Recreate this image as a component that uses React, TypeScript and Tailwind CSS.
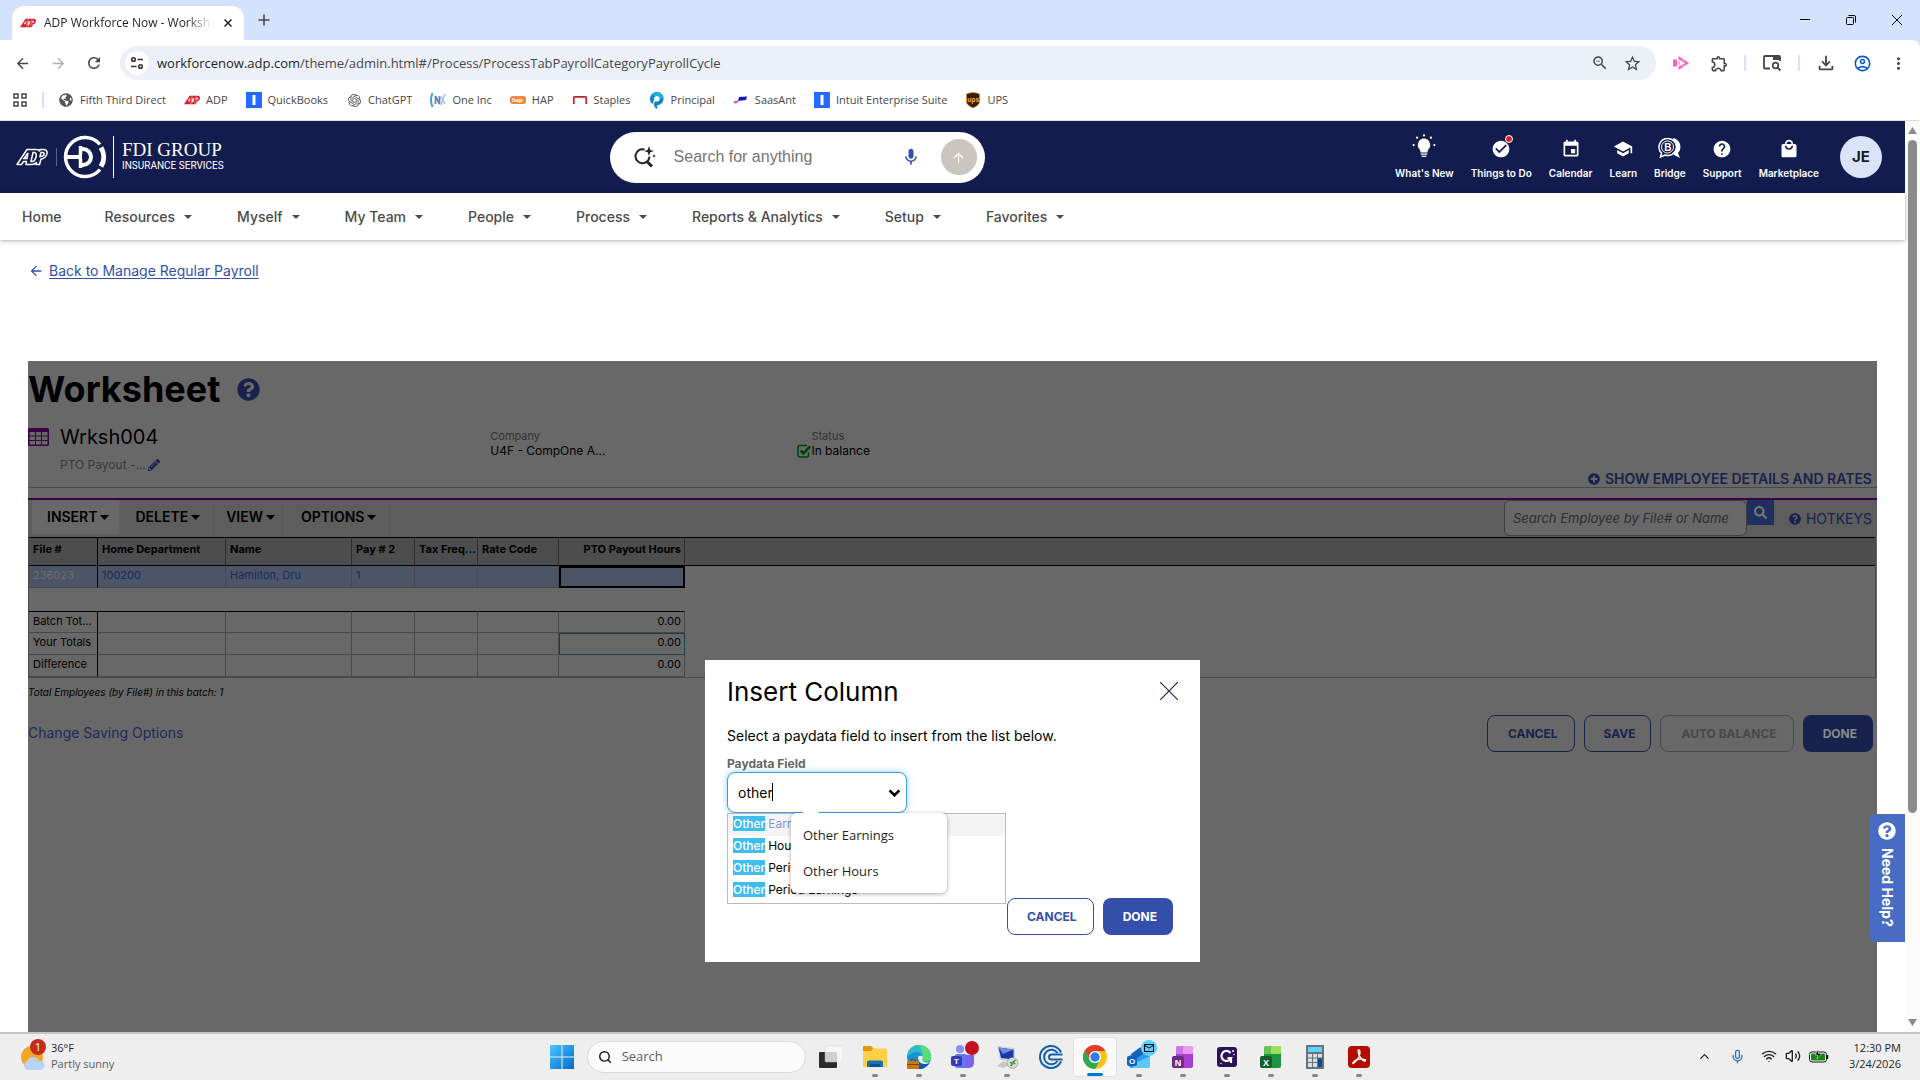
import React from "react";
import {
  MdArrowBack,
  MdArrowForward,
  MdRefresh,
  MdStarBorder,
  MdOutlineExtension,
  MdOutlineFileDownload,
  MdOutlineAccountCircle,
  MdMoreVert,
  MdCheckCircle,
  MdEvent,
  MdSchool,
  MdHelp,
  MdLocalMall,
  MdMic,
  MdArrowUpward,
  MdOutlineZoomOut,
  MdOutlineMailOutline,
} from "react-icons/md";
import {
  FaQuestionCircle,
  FaPlusCircle,
  FaPencilAlt,
  FaSearch,
  FaGlobeAmericas,
} from "react-icons/fa";
import { SiOpenai } from "react-icons/si";
import { Mic, ChevronUp, Wifi, Volume2, Search } from "lucide-react";

const UI = "font-['Open_Sans','Noto_Sans',sans-serif]";

/* ---------- small drawings ---------- */

function AdpMark({ className }: { className: string }) {
  return (
    <svg viewBox="0 0 32 18" className={className} aria-hidden="true">
      <path
        d="M0 17.500 L11 0.500 H28 Q33.500 1.500 31.500 7 Q30 11.500 25.500 12 L24 17.500 Z"
        fill="#d4222a"
      />
      <path
        d="M8 11 L12 5 L11 11 Z M15.500 13.500 L17.500 5 H18.500 Q20.500 5.500 19.500 9 Q18.500 13 16.500 13.500 Z M24.500 8.500 L25.500 4.500 H27 Q28.500 5 27.500 7 Q26.500 8.500 24.500 8.500 Z M13.500 17 L16 1.500 M21.500 17 L23.500 1.500"
        fill="#fff"
        stroke="#fff"
        strokeWidth="0.800"
      />
    </svg>
  );
}

function AdpHeaderLogo() {
  return (
    <svg viewBox="0 0 32 18" className="h-[18px] w-8" role="img" aria-label="ADP">
      <path
        d="M1 16.5 L11 1.5 H20 Q23 1.5 23.5 3 L24 1.5 H28 Q32.5 2.5 30.5 7 Q29 10.5 25 11 L23.5 16.5 H20 L20.5 14.5 Q18.500 16.500 16 16.500 H10 L10.500 13.500 H7.500 L5.500 16.500 Z"
        fill="none"
        stroke="#fff"
        strokeWidth="1.500"
        strokeLinejoin="round"
      />
      <path d="M8 10.500 L12 5 L11 10.500 Z M15 13.500 L17 4.500 H18.500 Q21 5 20 9 Q19 13 16.500 13.500 Z M24 8.500 L25 4.500 H27 Q29 5 27.500 7.500 Q26.500 8.500 24 8.500 Z" fill="none" stroke="#fff" strokeWidth="1.500" />
    </svg>
  );
}

function FdiEmblem() {
  return (
    <svg viewBox="0 0 44 44" className="h-11 w-11" aria-hidden="true">
      <g fill="none" stroke="#fff">
        <path d="M37 9.500 A19.500 19.500 0 1 0 37 34.500" strokeWidth="3.500" />
        <path d="M38 12.500 A18 18 0 0 1 38 31.500" strokeWidth="5" />
        <path d="M3 22 H19" strokeWidth="4" />
        <path d="M18.500 14 H20 A8 8 0 0 1 20 30 H18.500" strokeWidth="4" />
        <path d="M17.500 11 V20 M17.500 24 V33" strokeWidth="3.500" />
      </g>
    </svg>
  );
}

function PrincipalMark() {
  return (
    <svg viewBox="0 0 16 18" className="h-[17px] w-4">
      <path d="M8 0 A7 7 0 0 1 8 14 Q8 17 9 18 Q4 17 5 11 Q5.500 9.500 8 10 A3 3 0 1 0 5 7 Q5 10 3 13 A7.500 7.500 0 0 1 8 0Z" fill="#0d86c9" />
      <path d="M8 0 A7 7 0 0 1 15 7 H11 A3 3 0 0 0 6 5 L3 2 Q5 0 8 0Z" fill="#17b3dc" />
    </svg>
  );
}

function IntuitMark() {
  return (
    <svg viewBox="0 0 16 16" className="h-4 w-4">
      <rect width="16" height="16" fill="#236cff" />
      <rect x="6.500" y="3" width="3" height="10" fill="#fff" />
    </svg>
  );
}

function Caret({ className = "h-1 w-2" }: { className?: string }) {
  return (
    <svg viewBox="0 0 8 4" preserveAspectRatio="none" className={className} aria-hidden="true">
      <path d="M0 0 H8 L4 4 Z" fill="currentColor" />
    </svg>
  );
}

function GridMark() {
  return (
    <svg viewBox="0 0 21 18" className="h-[18px] w-[21px] shrink-0" aria-hidden="true">
      <rect width="21" height="18" rx="1.500" fill="#3a0046" />
      <path
        d="M1.500 4 H7 V7.500 H1.500Z M8 4 H13 V7.500 H8Z M14 4 H19.500 V7.500 H14Z M1.500 8.500 H7 V12 H1.500Z M8 8.500 H13 V12 H8Z M14 8.500 H19.500 V12 H14Z M1.500 13 H7 V16.500 H1.500Z M8 13 H13 V16.500 H8Z M14 13 H19.500 V16.500 H14Z"
        fill="#686868"
      />
    </svg>
  );
}

function BalancedMark() {
  return (
    <svg viewBox="0 0 14 14" className="-ml-px h-3.5 w-3.5" fill="none" stroke="#00400a" aria-hidden="true">
      <path d="M10 1.500 H3 Q1 1.500 1 3.500 V11 Q1 13 3 13 H9.500 Q11.500 13 11.500 11 V8" strokeWidth="1.500" />
      <path d="M3.500 6.500 L6.500 9.500 L13 2.500" strokeWidth="2.600" />
    </svg>
  );
}

function Bulb() {
  return (
    <svg viewBox="0 0 26 26" className="h-7 w-6" fill="#fff" aria-hidden="true">
      <path d="M13 5 A7 7 0 0 1 17 17.500 V20 H9 V17.500 A7 7 0 0 1 13 5Z" />
      <path d="M9.500 21 H16.500 V22.500 H9.500Z M10.500 23.500 H15.500 V25 H10.500Z" />
      <circle cx="13" cy="1.500" r="1.200" />
      <circle cx="5.500" cy="4" r="1.200" />
      <circle cx="20.500" cy="4" r="1.200" />
      <circle cx="1.800" cy="12" r="1.200" />
      <circle cx="24.200" cy="12" r="1.200" />
    </svg>
  );
}

function BridgeMark() {
  return (
    <svg viewBox="0 0 24 22" className="h-[22px] w-6" aria-hidden="true">
      <path d="M15 1 A9 9 0 0 1 20 16 L22 21 L16 18 Z" fill="#fff" />
      <path d="M9.500 1.500 A8.500 8.500 0 1 1 7 18 L2.500 20 L3.500 16 A8.500 8.500 0 0 1 9.500 1.500Z" fill="#121c4e" stroke="#fff" strokeWidth="1.500" />
      <circle cx="9.500" cy="10" r="6" fill="none" stroke="#fff" />
      <text x="6.300" y="13.600" fontSize="10" fontWeight="700" fontFamily="Liberation Sans" fill="#fff">B</text>
    </svg>
  );
}

/* ---------- browser chrome ---------- */

function TabStrip() {
  return (
    <div className="flex h-10 items-end bg-[#d3e2fd]">
      <div className="ml-3 flex h-[34px] w-[232px] items-center rounded-t-xl bg-white px-2">
        <AdpMark className="h-2.5 w-4 shrink-0" />
        <span className="ml-2 w-[168px] overflow-hidden whitespace-nowrap bg-gradient-to-r from-[#1f1f1f] from-85% to-transparent bg-clip-text text-xs text-transparent">
          ADP Workforce Now - Worksheet
        </span>
        <button aria-label="Close tab" className="ml-3 text-[#1f1f1f]">
          <svg viewBox="0 0 8 8" className="h-2 w-2">
            <path d="M0.500 0.500 L7.500 7.500 M7.500 0.500 L0.500 7.500" stroke="currentColor" strokeWidth="1.500" />
          </svg>
        </button>
      </div>
      <button aria-label="New tab" className="ml-[14px] flex h-10 items-center text-[#474747]">
        <svg viewBox="0 0 12 12" className="h-3 w-3">
          <path d="M6 0.500 V11.500 M0.500 6 H11.500" stroke="currentColor" strokeWidth="1.600" />
        </svg>
      </button>
      <div className="ml-auto flex h-10 items-center gap-9 pr-[18px]">
        <button aria-label="Minimize">
          <svg viewBox="0 0 10 10" className="h-2.5 w-2.5"><path d="M0 4.500 H10" stroke="#000" /></svg>
        </button>
        <button aria-label="Restore">
          <svg viewBox="0 0 10 10" className="h-2.5 w-2.5" fill="none" stroke="#000">
            <rect x="0.500" y="2.500" width="7" height="7" rx="1" />
            <path d="M2.500 0.500 H8 Q9.500 0.500 9.500 2 V7.500" />
          </svg>
        </button>
        <button aria-label="Close window">
          <svg viewBox="0 0 10 10" className="h-2.5 w-2.5"><path d="M0 0 L10 10 M10 0 L0 10" stroke="#000" /></svg>
        </button>
      </div>
    </div>
  );
}

function Toolbar() {
  return (
    <div className="bg-[#d3e2fd]">
      <div className="flex h-[43px] items-start rounded-tr-lg bg-white pl-2.5 pr-2.5 pt-1.5">
        <div className="flex h-[34px] flex-1 items-center text-[#474747]">
          <button aria-label="Back" className="flex w-6 justify-center"><MdArrowBack size={17} /></button>
          <button aria-label="Forward" className="ml-3 flex w-6 justify-center text-[#b0b0b0]"><MdArrowForward size={17} /></button>
          <button aria-label="Reload" className="ml-3 flex w-6 justify-center"><MdRefresh size={18} /></button>
          <div className="ml-3.5 flex h-[34px] flex-1 items-center rounded-full bg-[#ecf0f9] pl-[5px] pr-3.5">
            <span className="flex h-6 w-6 items-center justify-center rounded-full bg-white">
              <svg viewBox="0 0 14 14" className="h-3.5 w-3.5" fill="none" stroke="#333" strokeWidth="1.600">
                <circle cx="3.500" cy="3.500" r="1.800" />
                <path d="M7.500 3.500 H13 M1 10.500 H6.500" />
                <circle cx="10.500" cy="10.500" r="1.800" />
              </svg>
            </span>
            <div className="ml-2 flex-1 whitespace-nowrap pt-px text-[13px] text-[#474747]">
              <span className="text-[#1f1f1f]">workforcenow.adp.com</span>/theme/admin.html#/Process/ProcessTabPayrollCategoryPayrollCycle
            </div>
            <button aria-label="Zoom"><MdOutlineZoomOut size={18} /></button>
            <button aria-label="Bookmark this tab" className="ml-3.5"><MdStarBorder size={19} /></button>
          </div>
          <button aria-label="Recorder" className="ml-[13px] flex w-6 justify-center">
            <svg viewBox="0 0 16 14" className="h-3.5 w-4">
              <rect x="0" y="3.500" width="4" height="7" fill="#ff5fc0" />
              <path d="M5.500 0 L16 7 L5.500 14 V10.500 L8 9.500 L12 7 L8 4.500 L5.500 3.500Z" fill="#ff5fc0" />
              <path d="M6 5 V9" stroke="#ff5fc0" />
              <path d="M11 2.500 V5 M11 9 V11.500" stroke="#fff" strokeWidth="0.800" />
            </svg>
          </button>
          <button aria-label="Extensions" className="ml-3.5 flex w-6 justify-center"><MdOutlineExtension size={19} /></button>
          <span className="ml-[13px] h-4 w-0.5 bg-[#d3e2fd]" />
          <button aria-label="Search this page" className="ml-3.5 flex w-6 justify-center">
            <svg viewBox="0 0 18 18" className="h-[18px] w-[18px]" fill="none" stroke="#474747" strokeWidth="1.800">
              <path d="M7 14.500 H2 Q1 14.500 1 13.500 V3 Q1 2 2 2 H16 Q17 2 17 3 V7" />
              <path d="M10 1.500 H17 V6 H10Z" fill="#474747" stroke="none" />
              <circle cx="12.500" cy="11.500" r="2.800" />
              <path d="M14.500 13.500 L17.500 16.500" />
            </svg>
          </button>
          <span className="ml-3.5 h-4 w-0.5 bg-[#d3e2fd]" />
          <button aria-label="Downloads" className="ml-3.5 flex w-6 justify-center"><MdOutlineFileDownload size={22} /></button>
          <button aria-label="Profile" className="ml-3 flex w-6 justify-center text-[#0b57d0]"><MdOutlineAccountCircle size={19} /></button>
          <button aria-label="Menu" className="ml-3 flex w-6 justify-center"><MdMoreVert size={19} /></button>
        </div>
      </div>
    </div>
  );
}

const bookmarks: { name: string; icon: React.ReactNode }[] = [
  { name: "Fifth Third Direct", icon: <FaGlobeAmericas size={14} color="#555" /> },
  { name: "ADP", icon: <AdpMark className="h-2.5 w-4" /> },
  { name: "QuickBooks", icon: <IntuitMark /> },
  { name: "ChatGPT", icon: <SiOpenai size={13} color="#555" /> },
  {
    name: "One Inc",
    icon: (
      <svg viewBox="0 0 16 14" className="h-3.5 w-4" fill="none">
        <path d="M2.500 0 Q-0.500 7 2.500 14" stroke="#3f9fd8" strokeWidth="2" />
        <path d="M5.500 3 V11 M5.500 3 L9.500 11 V3" stroke="#6a86b0" strokeWidth="1.800" />
        <path d="M10.500 3 L15 11 M15 1 L11 12" stroke="#9fc3df" strokeWidth="1.500" />
      </svg>
    ),
  },
  {
    name: "HAP",
    icon: (
      <svg viewBox="0 0 16 8" className="h-2 w-4">
        <rect width="16" height="8" rx="3" fill="#f0873a" />
        <text x="2" y="6" fontSize="6" fontWeight="700" fontFamily="Liberation Sans" fill="#fff">hap</text>
      </svg>
    ),
  },
  {
    name: "Staples",
    icon: (
      <svg viewBox="0 0 16 9" className="h-2 w-4"><path d="M1 9 V2 Q1 1 2 1 H14 Q15 1 15 2 V9" fill="none" stroke="#cc1f2b" strokeWidth="2" /></svg>
    ),
  },
  { name: "Principal", icon: <PrincipalMark /> },
  {
    name: "SaasAnt",
    icon: (
      <svg viewBox="0 0 16 8" className="h-2 w-4">
        <path d="M6 1 L14 0.500 L13 4 L5 5Z" fill="#1a12c9" />
        <path d="M1 5 L5.500 4.500 L4.500 7 L1 7.500Z" fill="#e55bb8" />
      </svg>
    ),
  },
  { name: "Intuit Enterprise Suite", icon: <IntuitMark /> },
  {
    name: "UPS",
    icon: (
      <svg viewBox="0 0 16 17" className="h-4 w-4">
        <path d="M1 2 Q8 -1 15 2 V10 Q15 14 8 17 Q1 14 1 10Z" fill="#3a1c10" stroke="#e0a02a" strokeWidth="0.600" />
        <text x="2" y="11" fontSize="7" fontWeight="700" fontFamily="Liberation Sans" fill="#f4b32c">ups</text>
      </svg>
    ),
  },
];

function BookmarksBar() {
  return (
    <div className="flex h-[38px] items-center border-b border-[#dadce0] bg-white pb-[3px] pl-[13px]">
      <button aria-label="Apps">
        <svg viewBox="0 0 14 14" className="h-3.5 w-3.5" fill="none" stroke="#474747" strokeWidth="1.500">
          <path d="M1 1 H5 V5 H1Z M9 1 H13 V5 H9Z M1 9 H5 V13 H1Z M9 9 H13 V13 H9Z" />
        </svg>
      </button>
      <span className="ml-[15px] mr-3.5 h-4 w-0.5 bg-[#d3e2fd]" />
      <nav aria-label="Bookmarks" className="flex items-center gap-[18px]">
        {bookmarks.map((b) => (
          <a key={b.name} href="#bookmark" className="flex items-center gap-1.5 whitespace-nowrap text-[11px] text-[#474747]">
            <span className="flex w-4 justify-center">{b.icon}</span>
            {b.name}
          </a>
        ))}
      </nav>
    </div>
  );
}

/* ---------- site header ---------- */

const headerLinks: { label: string; icon: React.ReactNode }[] = [
  { label: "What's New", icon: <Bulb /> },
  {
    label: "Things to Do",
    icon: (
      <span className="relative">
        <MdCheckCircle size={20} />
        <span className="absolute -top-1 left-3.5 h-2 w-2 rounded-full border border-white bg-[#d0271d]" />
      </span>
    ),
  },
  { label: "Calendar", icon: <MdEvent size={20} /> },
  { label: "Learn", icon: <MdSchool size={20} /> },
  { label: "Bridge", icon: <BridgeMark /> },
  { label: "Support", icon: <MdHelp size={20} /> },
  { label: "Marketplace", icon: <MdLocalMall size={20} /> },
];

function HeaderBar() {
  return (
    <header className="flex h-[72px] items-center bg-[#121c4e] text-white">
      <div className="flex w-[32%] items-center pl-4">
        <AdpHeaderLogo />
        <span className="ml-2 mr-1.5 h-[18px] w-px bg-[#5a6390]" />
        <FdiEmblem />
        <div className="ml-1.5 flex h-[42px] flex-col justify-center border-l border-white pl-2">
          <span className="font-['Liberation_Serif',serif] text-[19px] leading-[18px]">FDI GROUP</span>
          <span className="font-['Roboto',sans-serif] text-[10px] leading-[14px]">INSURANCE SERVICES</span>
        </div>
      </div>
      <form className="flex h-[51px] w-[375px] items-center rounded-full bg-white pl-6 pr-2" onSubmit={(e) => e.preventDefault()}>
        <svg viewBox="0 0 22 22" className="h-[22px] w-[22px] shrink-0" fill="none" stroke="#222" strokeWidth="2">
          <path d="M10.500 3.500 A7 7 0 1 0 15.500 10.500" />
          <path d="M13 15.500 L18 20.500" strokeWidth="3" />
          <path d="M15 0 L16.300 4 L20 5 L16.300 6.300 L15 10 L13.700 6.300 L10 5 L13.700 4Z M20 8 L20.600 9.600 L22 10 L20.600 10.600 L20 12 L19.400 10.600 L18 10 L19.400 9.600Z" fill="#222" stroke="none" />
        </svg>
        <input
          aria-label="Search for anything"
          placeholder="Search for anything"
          className="ml-[18px] min-w-0 flex-1 font-['Liberation_Sans',sans-serif] text-base text-black outline-none placeholder:text-[#757575]"
        />
        <button type="button" aria-label="Voice search" className="text-[#334faa]"><MdMic size={20} /></button>
        <button aria-label="Submit search" className="ml-5 flex h-9 w-9 items-center justify-center rounded-full bg-[#cbc5bf]"><MdArrowUpward size={15} /></button>
      </form>
      <nav aria-label="Shortcuts" className="flex flex-1 items-center justify-end gap-[17px] pr-[23px]">
        {headerLinks.map((l) => (
          <a key={l.label} href="#shortcut" className="flex h-12 flex-col items-center justify-end whitespace-nowrap text-[10px] font-semibold">
            {l.icon}
            <span className="mt-1.5 leading-4">{l.label}</span>
          </a>
        ))}
        <button className="ml-1 h-[42px] w-[42px] rounded-full bg-[#d9e4f8] text-[15px] font-bold text-[#1c1c1c]">JE</button>
      </nav>
    </header>
  );
}

const menus = ["Resources", "Myself", "My Team", "People", "Process", "Reports & Analytics", "Setup", "Favorites"];

function MainNav() {
  return (
    <nav aria-label="Main" className="flex h-[47px] items-center bg-white pl-[22px] text-sm font-medium text-[#4b4b4b] shadow-[0_1px_4px_rgba(0,0,0,0.3)]">
      <a href="#home" className="mr-[43px]">Home</a>
      <div className="flex gap-[45px]">
        {menus.map((m) => (
          <button key={m} className="flex items-center gap-[9px] whitespace-nowrap">
            {m}
            <Caret />
          </button>
        ))}
      </div>
    </nav>
  );
}

/* ---------- worksheet ---------- */

const toolMenus = ["INSERT", "DELETE", "VIEW", "OPTIONS"];
const headings = ["File #", "Home Department", "Name", "Pay # 2", "Tax Freq...", "Rate Code", "PTO Payout Hours"];
const employee = ["236023", "100200", "Hamilton, Dru", "1", "", "", ""];
const totals = [
  { label: "Batch Tot...", value: "0.00" },
  { label: "Your Totals", value: "0.00" },
  { label: "Difference", value: "0.00" },
];

function WorksheetGrid() {
  return (
    <div className="mr-px border-x border-b border-[#494949]">
      <table className="w-full table-fixed border-separate border-spacing-0 text-left text-[11px] leading-[18px] text-black">
        <colgroup>
          <col className="w-[69px]" />
          <col className="w-[128px]" />
          <col className="w-[126px]" />
          <col className="w-[63px]" />
          <col className="w-[63px]" />
          <col className="w-[81px]" />
          <col className="w-[126px]" />
          <col />
        </colgroup>
        <thead>
          <tr className="h-[29px] bg-[#4d4d4d] align-top">
            {headings.map((h, i) => (
              <th
                key={h}
                className={
                  "whitespace-nowrap border-y border-r border-y-black pt-0.5 font-bold " +
                  (i === 0 ? "border-r-black pl-1" : i === 6 ? "border-r-[#2e2e2e] pr-[3px] text-right" : "border-r-[#2e2e2e] pl-1")
                }
              >
                {h}
              </th>
            ))}
            <td className="border-y border-black" />
          </tr>
        </thead>
        <tbody>
          <tr className="h-[22px] align-top text-[#1b2b5c]">
            {employee.map((v, i) => (
              <td
                key={i}
                className={
                  "whitespace-nowrap bg-[#4b5567] " +
                  (i === 0
                    ? "border-b border-r border-b-[#494949] border-r-black pl-1 text-[#6c6c6c]"
                    : i === 6
                      ? "border-2 border-black"
                      : "border-b border-r border-[#494949] pl-1")
                }
              >
                {v}
              </td>
            ))}
            <td />
          </tr>
          <tr className="h-[23px]">
            <td colSpan={8} />
          </tr>
          {totals.map((t, r) => (
            <tr key={t.label} className="h-[22px] align-top">
              {headings.map((h, i) => (
                <td
                  key={h}
                  className={
                    "whitespace-nowrap border-b border-r border-b-[#494949] " +
                    (r === 0 ? "border-t border-t-black " : "") +
                    (i === 0 ? "border-r-black pl-1" : i === 6 ? "border-r-[#494949] pr-[3px] text-right" : "border-r-[#494949]") +
                    (i === 6 && r === 1 ? " outline outline-1 -outline-offset-1 outline-[#1d3f49]" : "")
                  }
                >
                  {i === 0 ? t.label : i === 6 ? t.value : ""}
                </td>
              ))}
              <td />
            </tr>
          ))}
        </tbody>
      </table>
    </div>
  );
}

function InsertColumnDialog() {
  const options = ["Earnings", "Hours", "Period Hours", "Period Earnings"];
  return (
    <div role="dialog" aria-labelledby="dlg-title" className="w-[495px] bg-white px-[22px] pb-[27px] pt-[11px] text-black">
      <div className="flex h-10 items-center justify-between">
        <h2 id="dlg-title" className="text-[26px]">Insert Column</h2>
        <button aria-label="Close">
          <svg viewBox="0 0 18 18" className="h-[18px] w-[18px]"><path d="M0 0 L18 18 M18 0 L0 18" stroke="#1d2b4a" strokeWidth="1.200" /></svg>
        </button>
      </div>
      <p className="mt-[15px] text-sm">Select a paydata field to insert from the list below.</p>
      <label htmlFor="paydata" className="mt-[9px] block text-xs leading-[17px] font-bold text-[#666]">Paydata Field</label>
      <div className="relative w-[180px]">
        <div className="flex h-[41px] items-center rounded-lg border border-[#3f9be6] bg-white pl-2.5 pr-[5px] shadow-[0_0_6px_rgba(80,170,240,0.6)]">
          <input id="paydata" defaultValue="other" className="min-w-0 flex-1 bg-transparent text-sm outline-none" />
          <button aria-label="Open list">
            <svg viewBox="0 0 14 9" className="h-2 w-[13px]"><path d="M1.500 1.500 L7 7 L12.500 1.500" fill="none" stroke="#000" strokeWidth="3" /></svg>
          </button>
        </div>
        <span className="absolute left-[45px] top-[11px] h-[18px] w-px bg-black" />
        <ul className="absolute left-0 top-[41px] w-[279px] border border-[#bbb] bg-white pb-px text-xs">
          {options.map((o, i) => (
            <li key={o} className={"flex h-[22px] gap-[3px] pl-[5px] pt-0.5 leading-[15px] " + (i === 0 ? "bg-[#f4f4f4] text-[#8295e0]" : "")}>
              <span className="h-[15px] bg-[#3fbdee] font-medium text-white">Other</span>
              {o}
            </li>
          ))}
        </ul>
        <div className="absolute left-[64px] top-[41px] w-[156px] rounded-md bg-white shadow-[0_1px_4px_rgba(0,0,0,0.35)]">
          <span className="absolute -top-[6px] left-[14px] h-3 w-3 rotate-45 bg-white" />
          <ul className={"relative flex flex-col pb-[3px] pl-3 pt-[5px] text-[13px] text-[#1f1f1f] " + UI}>
            <li className="flex h-9 items-center">Other Earnings</li>
            <li className="flex h-9 items-center">Other Hours</li>
          </ul>
        </div>
      </div>
      <div className="mr-[5px] mt-[85px] flex justify-end gap-[9px]">
        <button className="h-[37px] rounded-lg border border-[#334faa] pl-[19px] pr-4 text-xs font-bold text-[#334faa]">CANCEL</button>
        <button className="h-[37px] rounded-lg bg-[#334faa] pl-5 pr-4 text-xs font-bold text-white">DONE</button>
      </div>
    </div>
  );
}

function Worksheet() {
  return (
    <section className="relative mx-7 flex-1 bg-[#686868] text-black">
      <div className="flex h-14 items-center">
        <h1 className="text-[36px] font-bold">Worksheet</h1>
        <button aria-label="Worksheet help" className="ml-[17px] text-[#17234c]"><FaQuestionCircle size={23} /></button>
      </div>
      <div className="grid h-[71px] grid-cols-12 border-b border-[#494949]">
        <div className="col-span-3 flex pt-[11px]">
          <GridMark />
          <div className="ml-[11px]">
            <p className="-mt-px text-xl leading-5">Wrksh004</p>
            <p className="mt-2 flex items-center text-xs leading-5 text-[#3a3a3a]">
              PTO Payout -...
              <button aria-label="Edit description" className="ml-0.5 text-[#17234c]"><FaPencilAlt size={12} /></button>
            </p>
          </div>
        </div>
        <div className="col-span-2 pt-3">
          <p className="text-[11px] leading-[14px] text-[#333]">Company</p>
          <p className="text-xs leading-4">U4F - CompOne A...</p>
        </div>
        <div className="col-span-2 pt-3">
          <p className="pl-[13px] text-[11px] leading-[14px] text-[#333]">Status</p>
          <p className="flex items-center text-xs leading-4">
            <BalancedMark />
            In balance
          </p>
        </div>
        <div className="col-span-5 flex items-end justify-end pr-[5px]">
          <button className="flex items-center gap-[5px] text-sm leading-4 font-semibold text-[#17234c]">
            <FaPlusCircle size={12} />
            SHOW EMPLOYEE DETAILS AND RATES
          </button>
        </div>
      </div>
      <div className="mt-2.5 flex h-[39px] items-stretch border-t-2 border-[#3a0046] bg-[#5d5d5d] pl-1">
        {toolMenus.map((m, i) => (
          <button
            key={m}
            className={
              "mb-[3px] flex items-center gap-[3px] border-r border-[#636363] pr-2.5 text-sm font-semibold " +
              (i === 0 ? "bg-[#686868] pl-[15px]" : "pl-[15px]")
            }
          >
            {m}
            <Caret className="h-[5px] w-[9px]" />
          </button>
        ))}
        <div className="ml-auto flex items-start">
          <input
            aria-label="Search employee"
            placeholder="Search Employee by File# or Name"
            className="h-9 w-[243px] rounded-md border border-[#3f3f3f] bg-[#686868] px-2 text-[13px] italic outline-none placeholder:text-[#2e2e2e]"
          />
          <button aria-label="Search" className="flex h-[25px] w-[27px] items-center justify-center bg-[#1f2f60] text-[#777]"><FaSearch size={13} /></button>
        </div>
        <button className="ml-[15px] mr-[5px] flex items-center gap-[5px] text-sm text-[#17234c]"><FaQuestionCircle size={12} />HOTKEYS</button>
      </div>
      <WorksheetGrid />
      <p className="h-[37px] pt-1.5 text-[10px] leading-4 italic">Total Employees (by File#) in this batch: 1</p>
      <div className="flex h-[37px] items-center justify-between pr-1">
        <a href="#saving" className="pb-0.5 text-sm text-[#1b2b5c]">Change Saving Options</a>
        <div className="flex gap-[9px]">
          <button className="h-[37px] rounded-lg border border-[#17234c] pl-5 pr-4 text-xs font-bold text-[#17234c]">CANCEL</button>
          <button className="h-[37px] rounded-lg border border-[#17234c] pl-[19px] pr-[15px] text-xs font-bold text-[#17234c]">SAVE</button>
          <button className="h-[37px] rounded-lg border border-[#4a4a4a] pl-5 pr-4 text-xs font-bold text-[#494949]">AUTO BALANCE</button>
          <button className="h-[37px] rounded-lg bg-[#17234c] pl-5 pr-4 text-xs font-bold text-[#8a8a8a]">DONE</button>
        </div>
      </div>
      <div className="absolute inset-x-0 top-[299px] flex justify-center">
        <InsertColumnDialog />
      </div>
    </section>
  );
}

/* ---------- taskbar ---------- */

function AppTile({ letter, from, body }: { letter: string; from: string; body: string }) {
  return (
    <svg viewBox="0 0 24 24" className="h-6 w-6">
      <rect x="5" y="1" width="17" height="22" rx="2" fill={body} />
      <rect x="12" y="1" width="10" height="8" rx="1" fill={from} />
      <rect x="5" y="1" width="8" height="8" rx="1" fill={from} opacity="0.600" />
      <rect x="1" y="11" width="12" height="12" rx="2" fill={body} />
      <rect x="1" y="11" width="12" height="12" rx="2" fill="#000" opacity="0.350" />
      <text x="7" y="20.500" textAnchor="middle" fontSize="9" fontWeight="700" fontFamily="Liberation Sans" fill="#fff">{letter}</text>
    </svg>
  );
}

const apps: { name: string; running: boolean; active?: boolean; icon: React.ReactNode }[] = [
  {
    name: "Task view",
    running: false,
    icon: (
      <svg viewBox="0 0 24 24" className="h-6 w-6">
        <rect x="0" y="7" width="18" height="16" rx="1" fill="#2b2b2b" />
        <rect x="6" y="1" width="18" height="16" rx="1" fill="#f8f8f8" opacity="0.800" stroke="#ccc" strokeWidth="0.500" />
      </svg>
    ),
  },
  {
    name: "File Explorer",
    running: true,
    icon: (
      <svg viewBox="0 0 24 24" className="h-6 w-6">
        <path d="M0 2 Q0 1 1 1 H8 L10 3 V8 H0Z" fill="#dc9a06" />
        <path d="M0 6 H8 L10 3.500 H23 Q24 3.500 24 5 V22 H0Z" fill="#ffcf48" />
        <path d="M4 22 V17 Q4 15.500 6 15.500 H18 Q20 15.500 20 17 V22Z" fill="#1273b8" />
        <path d="M7 19 H17 V22 H7Z" fill="#0b518c" />
      </svg>
    ),
  },
  {
    name: "Edge",
    running: true,
    icon: (
      <svg viewBox="0 0 24 24" className="h-6 w-6">
        <circle cx="12" cy="12" r="12" fill="#1791d8" />
        <path d="M3 4 A12 12 0 0 1 24 12 Q24 16.500 18 16.500 Q14.500 16 15.500 13 Q15 6.500 8 7.500 Q3 8 0.500 12 Q0.500 7 3 4Z" fill="#2fb9c9" />
        <path d="M12 0 A12 12 0 0 1 24 12 Q24 16.500 18 16.500 Q14.500 16 15.500 13 Q17 6 12 0Z" fill="#5fdc6e" />
        <path d="M10 12 Q10 19 18 19 Q21 19 23 17 A12 12 0 0 1 10 24Z" fill="#0f5ba8" />
        <path d="M11 12 A3 3 0 0 1 16 12 Q14 15 17 17 Q20 18 23 16.500 Q21 19.500 17 19 Q11 18 11 12Z" fill="#eee" />
        <rect x="0" y="16" width="12" height="8" rx="1" fill="#c77710" />
        <rect x="0" y="19" width="12" height="1" fill="#7a430b" />
        <path d="M4 16 V14.500 H8 V16" fill="none" stroke="#7a430b" />
      </svg>
    ),
  },
  {
    name: "Teams",
    running: true,
    icon: (
      <span className="relative">
        <svg viewBox="0 0 24 24" className="h-6 w-6">
          <circle cx="9" cy="4" r="4" fill="#8b8ff5" />
          <circle cx="19" cy="6" r="3" fill="#6a5de0" />
          <rect x="3" y="9" width="14" height="14" rx="4" fill="#5b7bf0" />
          <path d="M15 10 H23 V18 Q23 23 17 23 H14Z" fill="#7d63f0" />
          <rect x="0" y="11" width="11" height="10" rx="2" fill="#3d38b5" />
          <text x="5.500" y="19" textAnchor="middle" fontSize="8" fontWeight="700" fontFamily="Liberation Sans" fill="#fff">T</text>
        </svg>
        <span className="absolute -top-1 left-3.5 h-3.5 w-3.5 rounded-full bg-[#c50f1f]" />
      </span>
    ),
  },
  {
    name: "Remote Desktop",
    running: true,
    icon: (
      <svg viewBox="0 0 24 24" className="h-6 w-6">
        <path d="M2 1 L20 3 V17 L5 15Z" fill="#cfd4da" />
        <path d="M3.500 2.500 L18.500 4.500 V14.500 L6 13Z" fill="#1c39a8" />
        <path d="M3.500 2.500 L18.500 4.500 L8 9Z" fill="#6f8ce0" />
        <path d="M2 21 L9 16 L14 20 L8 23Z" fill="#c5c9ce" />
        <circle cx="17.500" cy="18" r="5.500" fill="#d8dcd8" stroke="#8a8f8a" strokeWidth="0.600" />
        <path d="M15 17 L17.500 19 L15.500 21 M20.500 15 L18 17 L20 19" stroke="#2e9440" strokeWidth="1.500" fill="none" />
      </svg>
    ),
  },
  {
    name: "Client portal",
    running: false,
    icon: (
      <svg viewBox="0 0 24 24" className="h-6 w-6" fill="none" stroke="#1560ad" strokeWidth="2">
        <path d="M22 7.500 A11 11 0 1 0 22 16.500" />
        <path d="M18.500 8 A7.300 7.300 0 1 0 18.500 16" />
        <path d="M23.500 9.500 H12.500 A2.500 2.500 0 0 0 12.500 14.500 H23.500" />
      </svg>
    ),
  },
  {
    name: "Chrome",
    running: true,
    active: true,
    icon: (
      <svg viewBox="0 0 24 24" className="h-6 w-6">
        <circle cx="12" cy="12" r="12" fill="#fbc116" />
        <path d="M1.600 6 A12 12 0 0 1 22.400 6 H12 A6 6 0 0 0 6.800 15Z" fill="#e33b2e" />
        <path d="M1.600 6 A12 12 0 0 0 12 24 L17.200 15 A6 6 0 0 1 6.800 15Z" fill="#2da94f" />
        <circle cx="12" cy="12" r="6" fill="#fff" />
        <circle cx="12" cy="12" r="4.700" fill="#2f7de9" />
      </svg>
    ),
  },
  {
    name: "Outlook",
    running: true,
    icon: (
      <span className="relative">
        <svg viewBox="0 0 24 24" className="h-6 w-6">
          <path d="M2 11 L12 3 L23 11 V20 Q23 23 20 23 H5 Q2 23 2 20Z" fill="#2c9af0" />
          <path d="M4 9 L14 2 L20 6 L9 14Z" fill="#1762b8" />
          <path d="M6 19 L23 11 V20 Q23 23 20 23 H6Z" fill="#5ac8fa" />
          <rect x="0" y="11" width="10" height="10" rx="2" fill="#0f60c0" />
          <text x="5" y="19" textAnchor="middle" fontSize="8" fontWeight="700" fontFamily="Liberation Sans" fill="#fff">O</text>
        </svg>
        <span className="absolute -top-[5px] left-3.5 flex h-4 w-4 items-center justify-center rounded-full bg-[#60cdff] text-black"><MdOutlineMailOutline size={12} /></span>
      </span>
    ),
  },
  { name: "OneNote", running: true, icon: <AppTile letter="N" from="#e79af0" body="#a93fd0" /> },
  {
    name: "G app",
    running: true,
    icon: (
      <svg viewBox="0 0 24 24" className="h-6 w-6">
        <rect x="2" y="2" width="20" height="20" rx="3" fill="#2c1259" />
        <path d="M15.500 8 A5 5 0 1 0 16 13 H12.500 M16 12 V18" fill="none" stroke="#fff" strokeWidth="2.200" />
        <circle cx="18" cy="6" r="1" fill="#fff" />
        <circle cx="19" cy="9.500" r="0.700" fill="#fff" />
        <circle cx="6" cy="18.500" r="0.700" fill="#fff" />
      </svg>
    ),
  },
  { name: "Excel", running: true, icon: <AppTile letter="X" from="#9be05a" body="#1d9346" /> },
  {
    name: "Calculator",
    running: true,
    icon: (
      <svg viewBox="0 0 24 24" className="h-6 w-6">
        <rect x="3" y="0" width="18" height="24" rx="1" fill="#66727d" />
        <rect x="5" y="2" width="14" height="5" fill="#5fd4f7" />
        <path d="M5 9 H9 V12.500 H5Z M10 9 H14 V12.500 H10Z M15 9 H19 V12.500 H15Z M5 13.500 H9 V17 H5Z M10 13.500 H14 V17 H10Z M5 18 H9 V22 H5Z M10 18 H14 V22 H10Z" fill="#d9dde0" />
        <rect x="15" y="13.500" width="4" height="8.500" fill="#0f4c8c" />
      </svg>
    ),
  },
  {
    name: "Acrobat",
    running: true,
    icon: (
      <svg viewBox="0 0 24 24" className="h-6 w-6">
        <rect x="1" y="1" width="22" height="22" rx="4" fill="#b30b00" />
        <path d="M12 5 Q14 6 12 12 Q9 17 6 18.500 Q5 17.500 9 15 Q14 13 18.500 15 Q18 17.500 14.500 14 Q11 10 11 6 Q11 5 12 5Z" fill="none" stroke="#fff" strokeWidth="1.400" />
      </svg>
    ),
  },
];

function Taskbar() {
  return (
    <footer className={"grid h-12 grid-cols-[1fr_auto_1fr] items-center border-t-2 border-[#c4c4c4] bg-[#eee] text-[11px] text-[#1f1f1f] " + UI}>
      <button aria-label="Weather" className="flex items-center gap-[5px] pb-0.5 pl-5 text-left">
        <span className="relative">
          <svg viewBox="0 0 26 30" className="h-[30px] w-[26px]">
            <circle cx="12" cy="16" r="11" fill="#f5a423" />
            <path d="M7 29 A5 5 0 0 1 7 20 A6.500 6.500 0 0 1 19 20 A4.500 4.500 0 0 1 21 29Z" fill="#b9d2f7" />
          </svg>
          <span className="absolute -top-0.5 left-2.5 flex h-4 w-4 items-center justify-center rounded-full bg-[#c42b1c] text-[11px] text-white">1</span>
        </span>
        <span className="leading-4">
          <span className="block">36°F</span>
          <span className="block text-[#5d5d5d]">Partly sunny</span>
        </span>
      </button>
      <div className="flex h-full items-center">
        <button aria-label="Start" className="flex w-11 justify-center">
          <svg viewBox="0 0 24 24" className="h-6 w-6">
            <defs>
              <linearGradient id="win" x1="0" y1="0" x2="1" y2="1">
                <stop offset="0" stopColor="#4cc8ff" />
                <stop offset="1" stopColor="#0069cc" />
              </linearGradient>
            </defs>
            <path d="M0 0 H11.500 V11.500 H0Z M12.500 0 H24 V11.500 H12.500Z M0 12.500 H11.500 V24 H0Z M12.500 12.500 H24 V24 H12.500Z" fill="url(#win)" />
          </svg>
        </button>
        <label className="mx-[3px] flex h-8 w-[219px] items-center rounded-full border border-[#dadada] bg-[#fbfbfb] pl-2.5">
          <Search size={16} strokeWidth={2.5} />
          <input aria-label="Search" placeholder="Search" className="ml-2.5 w-full min-w-0 bg-transparent text-[13px] outline-none placeholder:text-[#5d5d5d]" />
        </label>
        {apps.map((a) => (
          <button
            key={a.name}
            aria-label={a.name}
            className={"relative flex h-10 w-11 items-center justify-center rounded " + (a.active ? "border border-[#e2e2e2] bg-[#f9f9f9]" : "")}
          >
            {a.icon}
            {a.running && (
              <span className={"absolute bottom-0 h-[3px] rounded-full " + (a.active ? "w-4 bg-[#0078d4]" : "w-1.5 bg-[#868686]")} />
            )}
          </button>
        ))}
      </div>
      <div className="flex items-center justify-end pb-0.5 pr-[19px]">
        <ChevronUp size={15} />
        <Mic size={15} className="ml-[18px] text-[#1a6fc4]" />
        <Wifi size={16} className="ml-4" />
        <Volume2 size={16} className="ml-2" />
        <svg viewBox="0 0 20 14" className="ml-2 h-3.5 w-5">
          <rect x="0.500" y="3" width="17" height="10" rx="2.500" fill="#fff" stroke="#111" />
          <rect x="2" y="4.500" width="14" height="7" rx="1" fill="#138a13" />
          <path d="M18.500 6 V10" stroke="#111" strokeWidth="1.500" />
          <path d="M9.500 0 L6 6 H9 L8 10 L12.500 4.500 H9.500Z" fill="#111" stroke="#fff" strokeWidth="0.500" />
        </svg>
        <div className="ml-5 text-right leading-4">
          <p>12:30 PM</p>
          <p>3/24/2026</p>
        </div>
      </div>
    </footer>
  );
}

export default function App() {
  return (
    <div className="flex min-h-screen flex-col bg-white font-['Inter',sans-serif]">
      <div className={UI}>
        <TabStrip />
        <Toolbar />
        <BookmarksBar />
      </div>
      <div className="flex flex-1">
        <div className="relative flex min-w-0 flex-1 flex-col">
          <HeaderBar />
          <MainNav />
          <div className="flex h-[121px] items-start pl-7 pt-[21px] text-sm text-[#334faa]">
            <a href="#back" className="flex items-center">
              <MdArrowBack size={16} />
              <span className="ml-[5px] underline underline-offset-2">Back to Manage Regular Payroll</span>
            </a>
          </div>
          <Worksheet />
          <button className="absolute right-0 top-[693px] flex h-32 w-9 flex-col items-center rounded-l-lg bg-[#486cc4] pt-2 text-white">
            <FaQuestionCircle size={18} />
            <span className="mt-2 text-sm font-bold [writing-mode:vertical-rl]">Need Help?</span>
          </button>
        </div>
        <div aria-hidden="true" className="flex w-[15px] flex-col items-center bg-[#fcfcfc] pb-1.5 pt-1.5 text-[#8b8b8b]">
          <svg viewBox="0 0 9 7" className="h-[7px] w-[9px]"><path d="M4.500 0 L9 7 H0Z" fill="currentColor" /></svg>
          <div className="mt-1.5 h-[673px] w-[9px] rounded-full bg-[#8b8b8b]" />
          <svg viewBox="0 0 9 7" className="mt-auto h-[7px] w-[9px]"><path d="M4.500 7 L9 0 H0Z" fill="currentColor" /></svg>
        </div>
      </div>
      <Taskbar />
    </div>
  );
}
